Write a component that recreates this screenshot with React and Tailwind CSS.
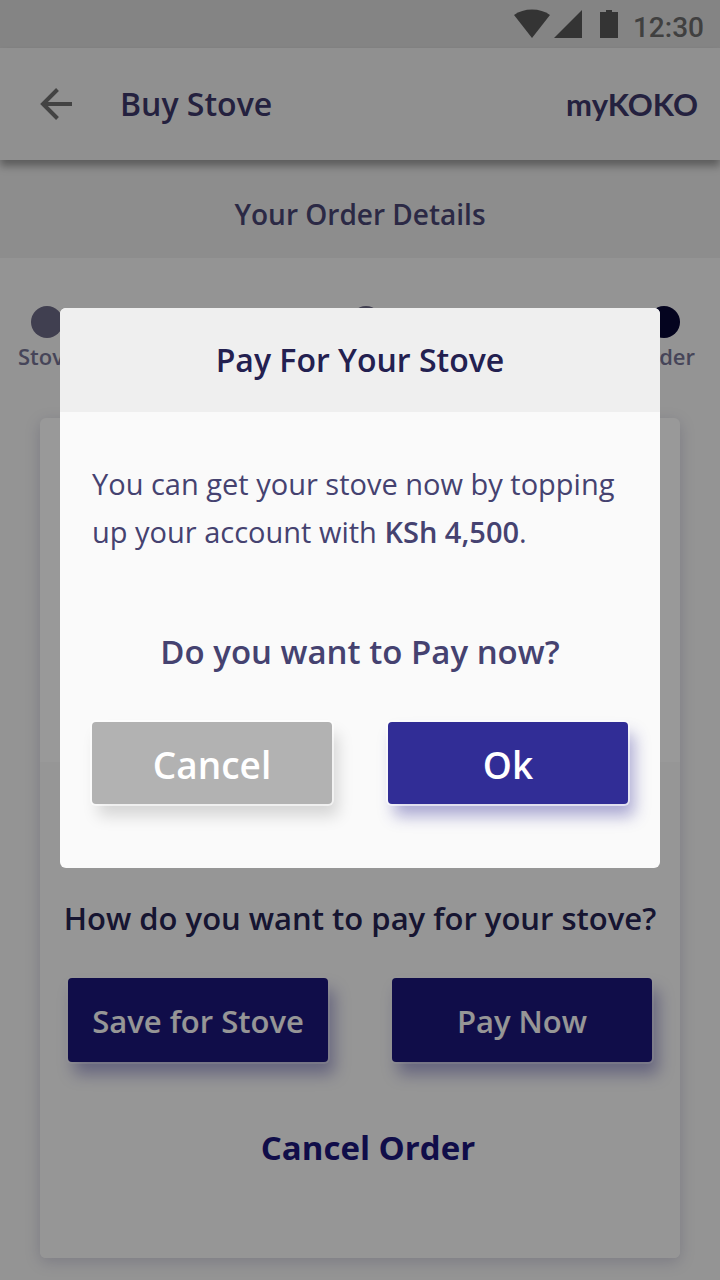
import React from "react";

function StatusBar() {
  return (
    <div className="flex h-12 items-center justify-end bg-[#dddddd] pr-4">
      <svg width="36" height="30" viewBox="0 0 36 30" className="mr-1" fill="#585858" aria-hidden="true">
        <path d="M0 6Q7.500 0.500 18 0.500T36 6L18 29Z" />
      </svg>
      <svg width="28" height="30" viewBox="0 0 28 30" className="mr-4" fill="#585858" aria-hidden="true">
        <path d="M28 1V29H0Z" />
      </svg>
      <svg width="20" height="30" viewBox="0 0 20 30" className="mr-[15px]" fill="#585858" aria-hidden="true">
        <path d="M8 1H14V3H20V29H2V3H8Z" />
      </svg>
      <span className="pt-2 font-['Roboto',sans-serif] text-[28px] leading-8 font-medium text-[#6c6c6c]">12:30</span>
    </div>
  );
}

function Header() {
  return (
    <header className="relative flex h-28 items-center bg-[#f0f0f0] pr-[22px] pl-10 shadow-[0_6px_8px_rgba(0,0,0,0.35)]">
      <button type="button" aria-label="Back" className="mr-12">
        <svg width="32" height="32" viewBox="0 0 32 32" fill="none" stroke="#717171" strokeWidth="4" aria-hidden="true">
          <path d="M32 16H3M17.500 1.500L3 16L17.500 30.500" />
        </svg>
      </button>
      <h1 className="text-[32px] leading-10 font-semibold text-[#3c3769]">Buy Stove</h1>
      <span className="ml-auto font-['Lato',sans-serif] text-[31px] leading-10 font-bold text-[#3c3769]">myKOKO</span>
    </header>
  );
}

function Step({ label, dot, className = "" }) {
  return (
    <li className={`flex flex-col items-center ${className}`}>
      <span className={`size-8 rounded-full ${dot}`} />
      <span className="mt-1 text-[22px] leading-7 font-semibold text-[#767494]">{label}</span>
    </li>
  );
}

function OrderButton({ children }) {
  return (
    <button
      type="button"
      className="h-[84px] flex-1 rounded-sm bg-[#1c177a] pt-0.5 text-[31px] leading-10 font-semibold text-[#fafafa] shadow-[0_0_0_2px_rgba(255,255,255,0.3),6px_12px_16px_rgba(49,45,150,0.4)]"
    >
      {children}
    </button>
  );
}

function PayDialog() {
  return (
    <div role="dialog" aria-modal="true" aria-labelledby="pay-title" className="mx-15 mt-77 w-full self-start overflow-hidden rounded-md bg-[#fafafa]">
      <h2 id="pay-title" className="bg-[#efefef] py-8 text-center text-[32px] leading-10 font-semibold text-[#232050]">
        Pay For Your Stove
      </h2>
      <div className="px-8 pt-12 pb-16">
        <p className="text-[29px] leading-12 text-[#454270]">
          You can get your stove now by topping up your account with <strong className="font-semibold">KSh 4,500</strong>.
        </p>
        <p className="mt-18 text-center text-[33px] leading-12 font-semibold text-[#454270]">Do you want to Pay now?</p>
        <div className="mt-[46px] flex gap-14">
          <button
            type="button"
            className="h-[82px] flex-1 rounded-sm bg-[#b2b2b2] pt-1 text-[37px] leading-12 font-semibold text-white shadow-[0_0_0_2px_rgba(255,255,255,0.6),6px_12px_16px_rgba(0,0,0,0.15)]"
          >
            Cancel
          </button>
          <button
            type="button"
            className="h-[82px] flex-1 rounded-sm bg-[#312d96] pt-1 text-[37px] leading-12 font-semibold text-white shadow-[0_0_0_2px_rgba(255,255,255,0.6),6px_12px_16px_rgba(49,45,150,0.4)]"
          >
            Ok
          </button>
        </div>
      </div>
    </div>
  );
}

export default function App() {
  return (
    <div className="relative min-h-screen bg-[#f7f7f7] font-['Open_Sans',sans-serif]">
      <StatusBar />
      <Header />
      <h2 className="bg-[#ebebeb] pt-[34px] pb-6 text-center text-[28px] leading-10 font-semibold text-[#484573]">
        Your Order Details
      </h2>
      <main className="pt-12 pb-[22px]">
        <ol className="flex justify-between pr-[25px] pl-[18px]">
          <Step label="Stove" dot="bg-[#6c6985]" />
          <Step label="Pay" dot="bg-[#6c6985]" className="pl-6" />
          <Step label="Order" dot="bg-[#080735]" />
        </ol>
        <section className="mx-10 mt-12 rounded-md bg-white shadow-[0_4px_16px_rgba(49,45,110,0.2)]">
          <div className="h-86" />
          <div className="rounded-b-md bg-[#fafafa] px-7 pt-[134px] pb-22">
            <h3 className="-mx-7 text-center text-[31px] leading-11 font-semibold text-[#262352]">How do you want to pay for your stove?</h3>
            <div className="mt-[38px] flex gap-16">
              <OrderButton>Save for Stove</OrderButton>
              <OrderButton>Pay Now</OrderButton>
            </div>
            <div className="mt-16 flex justify-center pl-4">
              <button type="button" className="text-[33px] leading-11 font-bold text-[#1c177a]">
                Cancel Order
              </button>
            </div>
          </div>
        </section>
      </main>
      <div className="absolute inset-0 flex bg-black/40">
        <PayDialog />
      </div>
    </div>
  );
}
